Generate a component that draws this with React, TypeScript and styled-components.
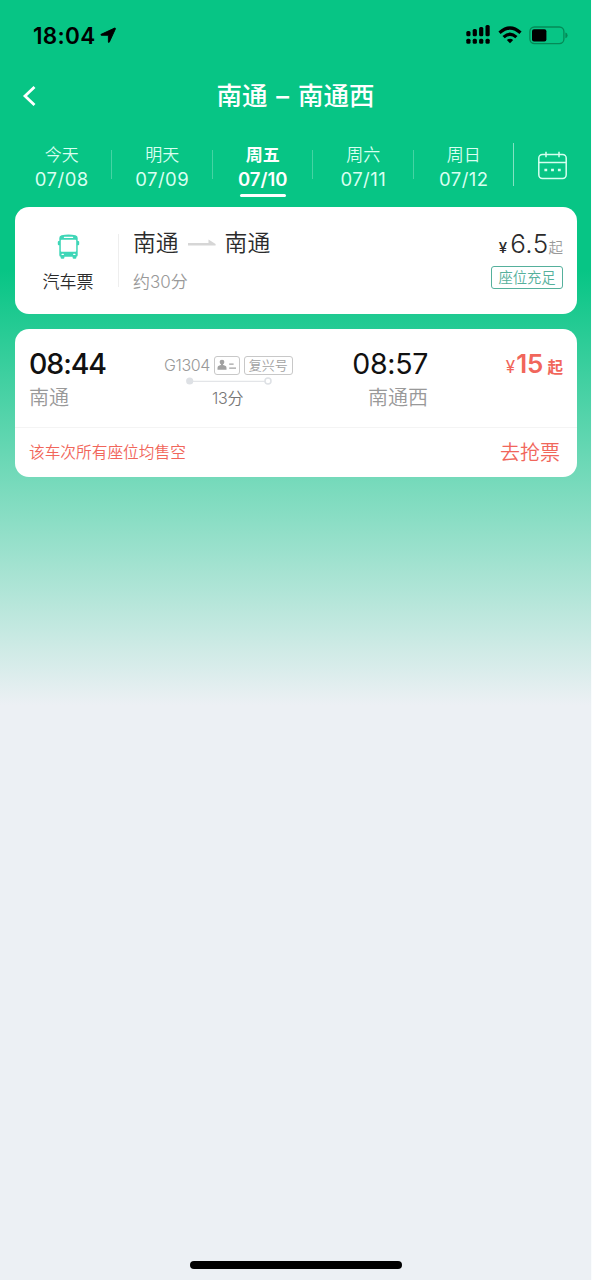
import React from 'react';
import styled, { createGlobalStyle } from 'styled-components';

const GlobalStyle = createGlobalStyle`
  * { box-sizing: border-box; }
  body {
    margin: 0;
    background: #fafcfd;
    font-family: Inter, 'Noto Sans CJK SC', sans-serif;
  }
`;

const Screen = styled.div`
  width: 591px;
  height: 1280px;
  display: flex;
  flex-direction: column;
  overflow: hidden;
  background: linear-gradient(#07c585 0, #07c585 270px, #ecf0f4 705px);
`;

const Text = styled.span<{ $size: number; $color?: string; $weight?: number; $lh?: number; $ls?: number }>`
  display: block;
  white-space: nowrap;
  font-size: ${p => p.$size}px;
  line-height: ${p => p.$lh ?? p.$size}px;
  color: ${p => p.$color ?? '#2b2b2b'};
  font-weight: ${p => p.$weight ?? 350};
  letter-spacing: ${p => p.$ls ?? 0}px;
`;

const Title = styled(Text)`
  word-spacing: 2px;
`;

const StatusBar = styled.header`
  display: flex;
  align-items: center;
  height: 70px;
  padding: 0 23px 0 33px;
`;

const StatusIcons = styled.div`
  display: flex;
  align-items: center;
  margin-left: auto;
`;

const TitleBar = styled.nav`
  display: grid;
  grid-template-columns: 57px 1fr 57px;
  align-items: center;
  justify-items: center;
  height: 52px;
`;

const Dates = styled.div`
  display: flex;
  height: 85px;
  padding: 20px 0 0 11.5px;
`;

const DateTab = styled.button<{ $last?: boolean }>`
  display: flex;
  flex-direction: column;
  align-items: center;
  width: 100.5px;
  padding: 1px 0 0;
  border: 0;
  background: linear-gradient(rgba(255, 255, 255, ${p => (p.$last ? 0.5 : 0.25)}) 0 0) right
    ${p => (p.$last ? '1px' : '8px')} / 1px ${p => (p.$last ? 43 : 29)}px no-repeat;
  font-family: inherit;
`;

const Underline = styled.i`
  width: 46px;
  height: 3px;
  margin-top: 2px;
  border-radius: 2px;
  background: #fff;
`;

const CalendarButton = styled.div`
  padding: 9px 0 0 24px;
`;

const Card = styled.section<{ $height: number }>`
  height: ${p => p.$height}px;
  margin: 0 14px 15px 14.5px;
  border-radius: 14px;
  background: #fff;
`;

const BusCard = styled(Card)`
  display: flex;
`;

const BusKind = styled.div`
  display: flex;
  flex-direction: column;
  align-items: center;
  width: 104px;
  padding: 27px 0 0 3px;
  background: linear-gradient(#eee 0 0) right 27px / 1px 53px no-repeat;
`;

const BusRoute = styled.div`
  flex: 1;
  padding: 22px 0 0 14.5px;
`;

const Row = styled.div<{ $gap?: number; $align?: string }>`
  display: flex;
  align-items: ${p => p.$align ?? 'center'};
  gap: ${p => p.$gap ?? 0}px;
`;

const BusPrice = styled.div`
  display: flex;
  flex-direction: column;
  align-items: flex-end;
  padding: 22px 14px 0 0;
`;

const SeatTag = styled.div`
  display: grid;
  place-items: center;
  width: 72px;
  height: 23px;
  margin-top: 3px;
  border: 1.5px solid #55b09c;
  border-radius: 3px;
`;

const TrainInfo = styled.div`
  display: flex;
  height: 99px;
  padding: 20px 14px 0 14.5px;
  border-bottom: 1px solid #f4f4f4;
`;

const Departure = styled.div`
  width: 135px;
`;

const TrainMiddle = styled.div`
  display: flex;
  flex-direction: column;
  width: 130px;
  padding-top: 6px;
`;

const Arrival = styled.div`
  display: flex;
  flex-direction: column;
  align-items: flex-end;
  width: 134px;
`;

const TrainPrice = styled.div`
  display: flex;
  align-items: baseline;
  height: 30px;
  margin-left: auto;
`;

const Tag = styled.div<{ $width: number }>`
  display: grid;
  place-items: center;
  width: ${p => p.$width}px;
  height: 19px;
  border: 1px solid #c8c8c8;
  border-radius: 3px;
`;

const SoldOut = styled.footer`
  display: flex;
  align-items: center;
  justify-content: space-between;
  height: 49px;
  padding: 0 17px 0 14.5px;
`;

const days = [
  ['今天', '07/08'],
  ['明天', '07/09'],
  ['周五', '07/10'],
  ['周六', '07/11'],
  ['周日', '07/12'],
];

const LocationArrow = () => (
  <svg width="17" height="17" viewBox="0 0 17 17" style={{ marginLeft: 5 }}>
    <path
      d="M1.200 7.300 14.600 1.100c.6-.2 1 .2.8.8L9.400 15c-.3.7-1 .5-1-.1V8.300H1.500c-.8 0-.9-.7-.3-1Z"
      fill="#000"
      stroke="#000"
      strokeWidth=".9"
    />
  </svg>
);

const Signal = () => (
  <svg width="25" height="20" viewBox="0 0 25 20">
    {[6, 8, 10, 12].map((h, i) => (
      <g key={h}>
        <rect x={0.3 + i * 6.4} y={12 - h} width="4.200" height={h - 0.7} rx="1.500" />
        <rect x={0.3 + i * 6.4} y="13.800" width="4.200" height="4.900" rx="1.500" />
      </g>
    ))}
  </svg>
);

const Wifi = () => (
  <svg width="24" height="18" viewBox="0 0 24 18" style={{ marginLeft: 7 }}>
    <g fill="none" stroke="#000" strokeWidth="3.200">
      <path d="M1.500 6.800Q12-2.800 22.500 6.800" />
      <path d="M5.600 11.200Q12 5.200 18.400 11.200" />
    </g>
    <path d="M8.800 14Q12 11.400 15.200 14L12 17.200Z" />
  </svg>
);

const Battery = () => (
  <svg width="39" height="19" viewBox="0 0 39 19" style={{ marginLeft: 7 }}>
    <rect x="0.9" y="1" width="34" height="16.6" rx="4.500" fill="none" stroke="#058a57" strokeWidth="1.300" />
    <rect x="3" y="3.200" width="14.400" height="12.400" rx="2" />
    <path d="M36.400 6.600q2.200.8 2.200 2.800t-2.200 2.800Z" fill="#058a57" />
  </svg>
);

const Calendar = () => (
  <svg width="29" height="29" viewBox="0 0 29 29" fill="none" stroke="#d6fff0" strokeWidth="1.500">
    <rect x="0.8" y="3.400" width="27.400" height="24" rx="3.600" />
    <path d="M.8 11.600h27.400M8 .8v5.400M21 .8v5.400" />
    <path d="M6.400 19h2.800M13.100 19h2.800M19.900 19h2.800" strokeWidth="2.400" />
  </svg>
);

const Bus = () => (
  <svg width="23" height="25" viewBox="0 0 23 25">
    <path
      fillRule="evenodd"
      fill="#3ed6b7"
      d="M4.500 1.300Q11.500-.3 18.500 1.300q2.200.5 2.200 2.800v3h.5q1 0 1 1v2.200q0 1-1 1h-.5V21q0 1.500-1.300 1.700v.9q0 1.200-1.200 1.200h-1.400q-1.200 0-1.200-1.200v-.8H7.400v.8q0 1.200-1.200 1.200H4.800q-1.200 0-1.200-1.200v-.9Q2.300 22.500 2.300 21v-9.700h-.5q-1 0-1-1V8.100q0-1 1-1h.5v-3q0-2.300 2.200-2.800ZM4.600 5.800q-.8 0-.8.8v10.300q0 .8.800.8h13.800q.8 0 .8-.8V6.600q0-.8-.8-.8Z"
    />
    <rect x="6.800" y="2.800" width="9.400" height="1.200" rx=".6" fill="#fff" />
    <rect x="4.400" y="19.700" width="2.600" height="1.300" rx=".65" fill="#fff" />
    <rect x="16" y="19.700" width="2.600" height="1.300" rx=".65" fill="#fff" />
  </svg>
);

const RouteArrow = () => (
  <svg width="28" height="8" viewBox="0 0 28 8">
    <path d="M0 3.900h20.500V.6L27.600 5.100v1.500H0Z" fill="#d6d6d6" />
  </svg>
);

const IdCard = () => (
  <svg width="20" height="12" viewBox="0 0 20 12" fill="#a2a2a2">
    <circle cx="5" cy="3.100" r="2.400" />
    <path d="M3.900 4.500h2.200v1.600q3.400.6 3.400 2.800v1.900H.5V8.900q0-2.200 3.400-2.800Z" />
    <path d="M12.200 4.600h4.400v1.200h-4.400ZM12.200 8.600h6.800v1.200h-6.800Z" />
  </svg>
);

const Track = () => (
  <svg width="86" height="8" viewBox="0 0 86 8" style={{ marginLeft: 22, marginTop: 2 }}>
    <path d="M4 4.300h75" stroke="#e3e5e8" strokeWidth="1.300" />
    <circle cx="3.700" cy="4" r="3.600" fill="#dee1e5" />
    <circle cx="82" cy="4" r="3" fill="#fff" stroke="#dee1e5" strokeWidth="1.500" />
  </svg>
);

const HomeArea = styled.div`
  display: flex;
  justify-content: center;
  margin-top: auto;
  padding-bottom: 11px;
`;

const HomeIndicator = styled.div`
  width: 212px;
  height: 8px;
  border-radius: 4px;
  background: #000;
`;

export default function App() {
  return (
    <>
      <GlobalStyle />
      <Screen>
        <StatusBar>
          <Text $size={22.5} $weight={560} $color="#000" $lh={28} $ls={0.3} style={{ marginTop: 1 }}>18:04</Text>
          <LocationArrow />
          <StatusIcons>
            <Signal />
            <Wifi />
            <Battery />
          </StatusIcons>
        </StatusBar>

        <TitleBar>
          <svg width="14" height="22" viewBox="0 0 14 22">
            <path d="M12.500 2 3 11l9.500 9" fill="none" stroke="#fff" strokeWidth="2.800" />
          </svg>
          <Title $size={25.5} $weight={500} $color="#fff" $lh={30}>南通 – 南通西</Title>
        </TitleBar>

        <Dates>
          {days.map(([name, date], i) => (
            <DateTab key={date} $last={i === 4}>
              <Text $size={17} $lh={24} $weight={i === 2 ? 700 : 350} $color={i === 2 ? '#fff' : '#d9fff1'}>
                {name}
              </Text>
              <Text $size={18.5} $lh={25} $ls={i === 2 ? 0 : 0.45} $weight={i === 2 ? 600 : 370} $color={i === 2 ? '#fff' : '#d9fff1'}>
                {date}
              </Text>
              {i === 2 && <Underline />}
            </DateTab>
          ))}
          <CalendarButton>
            <Calendar />
          </CalendarButton>
        </Dates>

        <BusCard $height={107}>
          <BusKind>
            <Bus />
            <Text $size={17} $lh={24} style={{ marginTop: 11 }}>汽车票</Text>
          </BusKind>
          <BusRoute>
            <Row $gap={9}>
              <Text $size={22.8} $lh={28}>南通</Text>
              <RouteArrow />
              <Text $size={22.8} $lh={28}>南通</Text>
            </Row>
            <Text $size={17} $lh={24} $color="#999" style={{ marginTop: 13 }}>约30分</Text>
          </BusRoute>
          <BusPrice>
            <Row $align="baseline">
              <Text $size={15} $lh={30} $weight={450} style={{ marginRight: 3 }}>¥</Text>
              <Text $size={26} $lh={30} $ls={0.4}>6.5</Text>
              <Text $size={14.5} $lh={30} $color="#999">起</Text>
            </Row>
            <SeatTag>
              <Text $size={14.3} $lh={18} $color="#55b09c">座位充足</Text>
            </SeatTag>
          </BusPrice>
        </BusCard>

        <Card $height={148}>
          <TrainInfo>
            <Departure>
              <Text $size={28.5} $lh={29} $ls={-1.1} $weight={460} $color="#111">08:44</Text>
              <Text $size={20} $lh={26} $color="#999" style={{ marginTop: 7 }}>南通</Text>
            </Departure>
            <TrainMiddle>
              <Row $gap={4}>
                <Text $size={16} $lh={20} $ls={-0.4} $color="#999">G1304</Text>
                <Tag $width={26}><IdCard /></Tag>
                <Tag $width={49}><Text $size={13} $lh={16} $color="#a2a2a2">复兴号</Text></Tag>
              </Row>
              <Track />
              <Text $size={16} $lh={22} $ls={-0.3} $color="#777" style={{ marginLeft: 48, marginTop: 2 }}>13分</Text>
            </TrainMiddle>
            <Arrival>
              <Text $size={28.5} $lh={29} $ls={-0.3} $weight={370} $color="#111">08:57</Text>
              <Text $size={20} $lh={26} $color="#999" style={{ marginTop: 7 }}>南通西</Text>
            </Arrival>
            <TrainPrice>
              <Text $size={17} $lh={30} $color="#f1665b" $weight={420} style={{ marginRight: 1 }}>¥</Text>
              <Text $size={26} $lh={30} $weight={580} $color="#f1665b">15</Text>
              <Text $size={15.5} $lh={30} $weight={700} $color="#f1665b" style={{ marginLeft: 4 }}>起</Text>
            </TrainPrice>
          </TrainInfo>
          <SoldOut>
            <Text $size={15.7} $lh={24} $color="#f1665b">该车次所有座位均售空</Text>
            <Text $size={20} $lh={26} $color="#f1665b">去抢票</Text>
          </SoldOut>
        </Card>

        <HomeArea>
          <HomeIndicator />
        </HomeArea>
      </Screen>
    </>
  );
}
